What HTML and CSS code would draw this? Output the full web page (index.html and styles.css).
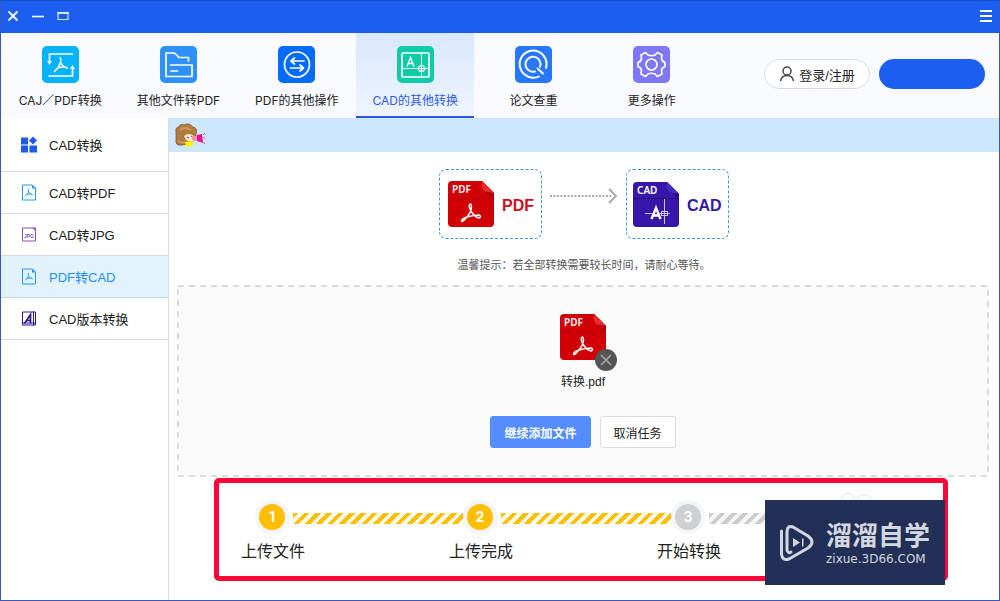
FILE: index.html
```html
<!DOCTYPE html>
<html lang="zh-CN">
<head>
<meta charset="utf-8">
<meta name="viewport" content="width=device-width, initial-scale=1">
<title>CAD转换</title>
<link rel="stylesheet" href="styles.css">
</head>
<body>
<svg class="defs" aria-hidden="true">
  <symbol id="pdf-file" viewBox="0 0 46 46">
    <path d="M4 0H34L46 12V42Q46 46 42 46H4Q0 46 0 42V4Q0 0 4 0Z" fill="#d00006"/>
    <path d="M0 17.500H46" stroke="#b10008"/>
    <path d="M34 0 46 12V17L34 9Z" fill="#a90009"/>
    <path d="M34 0V6Q35 11 40 11L46 12Z" fill="#ee2a2a"/>
    <path d="M21.500 23.500Q23.500 22 23.500 26Q23 32 18 37Q14 42 13.500 40Q14 37 21 35.500Q27 34 31 34Q34 35.500 31 37Q27 36 23.500 31Q20.500 25.500 21.500 23.500Z" fill="none" stroke="#fff" stroke-width="1.500" stroke-linejoin="round"/>
  </symbol>
  <symbol id="page-pdf" viewBox="0 0 14 17">
    <path d="M.5 1H10.500L13.500 4V16H.5Z" fill="none" stroke="#2196f3"/>
    <path d="M10 1V4.500H13.500Z" fill="#2196f3"/>
    <path d="M6.500 5V8Q5 11 3 12.500M6.500 8Q8 10.500 11 11M4.500 10.800Q7 9.500 9.500 10" fill="none" stroke="#2196f3" stroke-width=".9"/>
  </symbol>
</svg>
<div class="window">
  <header class="titlebar">
    <button class="win-btn" aria-label="关闭"><svg width="12" height="12"><path d="M1.500 1.500 10.500 10.500M10.500 1.500 1.500 10.500" stroke="#fff" stroke-width="1.800"/></svg></button>
    <button class="win-btn" aria-label="最小化"><svg width="12" height="12"><path d="M0 6.500H12" stroke="#fff" stroke-width="1.600"/></svg></button>
    <button class="win-btn" aria-label="最大化"><svg width="12" height="12"><path d="M1 2.500H11V9.500H1Z" fill="none" stroke="#dbe7ff" stroke-width="1.200"/><path d="M.5 3H11.500" stroke="#fff" stroke-width="1.500"/></svg></button>
    <button class="win-btn menu-btn" aria-label="菜单"><svg width="14" height="14"><path d="M1 2H13M1 7H13M1 12H13" stroke="#fff" stroke-width="2"/></svg></button>
  </header>
  <div class="toolbar">
    <nav class="tabs">
      <button class="tab"><svg class="tab-icon" viewBox="0 0 37 37"><rect width="37" height="37" rx="5" fill="#06b2fa"/><g fill="none" stroke="#fff" stroke-width="1.700"><path d="M31 8H7.500V16M6.500 30H30.500V22"/><path d="M17.500 12Q19.500 11 18.500 16Q17.500 21 12 26M18.500 16Q20 21 26 22M14 23Q19 20 24 21.500" stroke-width="1.400"/></g><g fill="#fff"><path d="M5 15H10L7.500 19ZM28 23H33L30.500 19Z"/></g></svg><span>CAJ／PDF转换</span></button>
      <button class="tab"><svg class="tab-icon" viewBox="0 0 37 37"><rect width="37" height="37" rx="5" fill="#2e90fa"/><path d="M28.500 15V11.500H19L14.500 7H6V30.500H32V19H10.500M11 25H17.500" fill="none" stroke="#fff" stroke-width="1.700" stroke-linejoin="round" stroke-linecap="round"/></svg><span>其他文件转PDF</span></button>
      <button class="tab"><svg class="tab-icon" viewBox="0 0 37 37"><rect width="37" height="37" rx="5" fill="#046cfc"/><g fill="none" stroke="#fff" stroke-width="1.700" stroke-linecap="round" stroke-linejoin="round"><circle cx="19" cy="18.500" r="12.500"/><path d="M26 15H13M16.500 12 13 15 16.500 18M12.500 22H25.500M22 19 25.500 22 22 25"/></g></svg><span>PDF的其他操作</span></button>
      <button class="tab tab-active"><svg class="tab-icon" viewBox="0 0 37 37"><rect width="37" height="37" rx="5" fill="#0dcca7"/><g fill="none" stroke="#fff"><rect x="5" y="7" width="27" height="24" rx="1" stroke-width="1.700"/><path d="M5 22.500H32M24.500 7V31"/><circle cx="24.500" cy="22.500" r="3" stroke-width="1.200"/><path d="M10 20.500 13.500 11.500 17 20.500M11.200 17.500H15.800" stroke-width="1.400"/></g></svg><span>CAD的其他转换</span></button>
      <button class="tab"><svg class="tab-icon" viewBox="0 0 37 37"><rect width="37" height="37" rx="5" fill="#2677fa"/><g fill="none" stroke="#fff" stroke-width="1.900" stroke-linecap="round"><path d="M24 30.500Q16 34 9 28A13.500 13.500 0 1 1 31 22"/><path d="M20 25.500A7.500 7.500 0 1 1 25 21M22.500 22.500 28 27.500"/></g></svg><span>论文查重</span></button>
      <button class="tab"><svg class="tab-icon" viewBox="0 0 37 37"><rect width="37" height="37" rx="5" fill="#7e78f8"/><g fill="none" stroke="#fff" stroke-width="1.700" stroke-linejoin="round"><path d="M12.500 6.500 15 9Q18.500 10.500 22 9L24.500 6.500 29 9 28.500 12.500Q29 15.500 32 16.500V20.500Q29 21.500 28.500 24.500L29 28 24.500 30.500 22 28Q18.500 26.500 15 28L12.500 30.500 8 28 8.500 24.500Q8 21.500 5 20.500V16.500Q8 15.500 8.500 12.500L8 9Z"/><circle cx="18.500" cy="18.500" r="5.500"/></g></svg><span>更多操作</span></button>
    </nav>
    <div class="account">
      <button class="login"><svg width="16" height="16" viewBox="0 0 16 16"><g fill="none" stroke="#444" stroke-width="1.500"><circle cx="8" cy="5" r="4"/><path d="M1.500 15Q2.500 9.500 8 9.500T14.500 15"/></g></svg>登录/注册</button>
      <button class="vip" aria-label="会员"></button>
    </div>
  </div>
  <div class="body">
    <nav class="sidebar">
      <div class="side-row side-head"><svg class="side-icon" viewBox="0 0 16 16"><path d="M0 1H7V8H0ZM0 9H7V16H0ZM8.500 9H16V16H8.500ZM12 0 16 4 12 8 8 4Z" fill="#1e5aea"/></svg>CAD转换</div>
      <a class="side-row" href="#pdf"><svg class="side-icon"><use href="#page-pdf"/></svg>CAD转PDF</a>
      <a class="side-row" href="#jpg"><svg class="side-icon" viewBox="0 0 16 16"><path d="M1.500 1.500H12L14.500 4V14.500H1.500Z" fill="none" stroke="#8d55a8"/><path d="M11 1H15V5Z" fill="#8d55a8"/><text x="3" y="11" class="jpg-tag">JPG</text></svg>CAD转JPG</a>
      <a class="side-row side-active" href="#cad"><svg class="side-icon"><use href="#page-pdf"/></svg>PDF转CAD</a>
      <a class="side-row" href="#version"><svg class="side-icon" viewBox="0 0 16 16"><g fill="none" stroke="#31148c"><path d="M1.500 1.500H14.500V14.500H1.500ZM1 12.500H15M12.500 1V15"/><path d="M3.500 13 9.500 4V13M5.500 10H10" stroke-width="1.700"/></g></svg>CAD版本转换</a>
    </nav>
    <main class="main">
      <div class="banner"><svg width="32" height="26" viewBox="0 0 32 26"><path d="M1 9Q0 4 4 4Q5 0 9 2Q14 -1 18 4Q23 5 21 11L21 16Q15 22 7 22Q0 23 1 17Z" fill="#b07a3c" stroke="#80501f" stroke-width=".7"/><path d="M5 7Q10 3 16 7M3 17Q6 21 10 19" stroke="#cf9a58" stroke-width="2" fill="none"/><path d="M9 13Q14 9 19 13L20 17Q15 20 11 17Z" fill="#ffe5d3"/><path d="M12 14 14 15M16 13 18 14" stroke="#75342d"/><path d="M10 19 18 18 18 23 11 24Z" fill="#fff20a"/><path d="M17 13 22 13 22 18 17 17Z" fill="#ef92a5"/><path d="M22 12 27 11 28 20 22 18Z" fill="#e81789"/><path d="M28 12 30 10M28 15H30M28 19 30 21" stroke="#f34ba2"/></svg></div>
      <section class="flow">
        <div class="format format-pdf"><svg class="file-icon" viewBox="0 0 46 46"><use href="#pdf-file"/><text x="4" y="12" class="file-tag">PDF</text></svg><span class="format-name">PDF</span></div>
        <svg class="arrow" viewBox="0 0 68 18"><path d="M0 9H62" stroke="#aaa" stroke-width="2" stroke-dasharray="2 1.500"/><path d="M59 2 66 9 59 16" fill="none" stroke="#aaa" stroke-width="2"/></svg>
        <div class="format format-cad"><svg class="file-icon" viewBox="0 0 46 46"><path d="M4 1H34L46 13V42Q46 46 42 46H4Q0 46 0 42V5Q0 1 4 1Z" fill="#3617aa"/><path d="M0 17.500H46" stroke="#24107c"/><path d="M34 1 46 13V17L34 9Z" fill="#1e0b79"/><path d="M34 1V8Q36 12 40 12L46 13Z" fill="#482bc1"/><text x="4" y="13" class="file-tag">CAD</text><path d="M18.500 38 23 27 27.500 38M20 34.500H26" stroke="#fff" stroke-width="2.400" fill="none"/><path d="M12 32.500H19M26 32.500H37M31.500 18V43" stroke="#c9c0ec"/><rect x="28.500" y="30.500" width="6" height="4" fill="none" stroke="#c9c0ec"/></svg><span class="format-name">CAD</span></div>
      </section>
      <p class="tip">温馨提示：若全部转换需要较长时间，请耐心等待。</p>
      <section class="drop">
        <svg class="drop-frame" aria-hidden="true"><rect x="1" y="1" width="100%" height="100%" class="drop-line"/></svg>
        <div class="file">
          <div class="file-thumb"><svg class="file-icon" viewBox="0 0 46 46"><use href="#pdf-file"/><text x="4" y="12" class="file-tag">PDF</text></svg><button class="remove" aria-label="删除"><svg width="22" height="22"><path d="M6 6 16 16M16 6 6 16" stroke="#aaa" stroke-width="1.600"/></svg></button></div>
          <span class="file-name">转换.pdf</span>
        </div>
        <div class="actions"><button class="btn btn-primary">继续添加文件</button><button class="btn">取消任务</button></div>
      </section>
      <section class="steps">
        <ol class="step-list">
          <li class="step"><span class="dot">1</span><span>上传文件</span></li>
          <li class="step"><span class="dot">2</span><span>上传完成</span></li>
          <li class="step step-off"><span class="dot">3</span><span>开始转换</span></li>
        </ol>
        <svg class="rings" width="32" height="16"><g fill="none" stroke="#ddd"><circle cx="8" cy="8" r="6.500"/><circle cx="24" cy="9" r="6.500"/></g></svg>
        <div class="brand">
          <svg width="36" height="38" viewBox="0 0 36 38"><g fill="none" stroke="#d3d7df" stroke-width="3" stroke-linecap="round" stroke-linejoin="round"><path d="M2.500 7V30Q3 37 10 35L29 24Q37 18 29 12L14 3Q8 1 8 8V26Q9 30 12 28"/></g><path d="M14 14V23L21 18.500ZM23 14.500H24.500V22.500H23Z" fill="#d3d7df"/></svg>
          <div class="brand-text"><span class="brand-name">溜溜自学</span><span class="brand-url">zixue.3D66.COM</span></div>
        </div>
      </section>
    </main>
  </div>
</div>
</body>
</html>
```
FILE: styles.css
```css
* { box-sizing: border-box; }
body {
  margin: 0;
  font-family: "Liberation Sans", "Noto Sans CJK SC", sans-serif;
  font-size: 13px;
  color: #222;
}
button { font: inherit; color: inherit; border: 0; padding: 0; background: none; }
svg { display: block; flex: none; }
.defs { position: absolute; width: 0; height: 0; }
.window {
  display: flex;
  flex-direction: column;
  min-height: 100vh;
  border: 1px solid #3b58b4;
  border-top-color: #184bc8;
  background: #fff;
}
.titlebar {
  display: flex;
  align-items: center;
  gap: 13px;
  height: 32px;
  padding: 0 6px 2px;
  background: #1b5ef0;
}
.menu-btn { margin-left: auto; }
.toolbar {
  display: flex;
  justify-content: space-between;
  height: 85px;
  background: #f9faff;
}
.tabs { display: grid; grid-template-columns: repeat(6, 1fr); flex: 0 1 710px; }
.tab {
  display: flex;
  flex-direction: column;
  align-items: center;
  gap: 8px;
  padding-top: 13px;
  border-bottom: 2px solid transparent;
  font-family: Inter, "Noto Sans CJK SC", sans-serif;
  font-size: 12px;
  line-height: 20px;
  white-space: nowrap;
}
.tab-active {
  color: #2d5ce8;
  border-bottom-color: #2857dc;
  background: linear-gradient(#d9e7fc, #eff4ff);
}
.tab-icon { width: 37px; height: 37px; }
.account { display: flex; align-items: center; gap: 9px; padding: 0 14px 3px 0; }
.login {
  display: flex;
  align-items: center;
  justify-content: center;
  gap: 4px;
  width: 106px;
  height: 30px;
  border: 1px solid #d8dbe2;
  border-radius: 15px;
  background: #fff;
}
.vip { width: 106px; height: 30px; border-radius: 15px; background: #1b5ef0; }
.body { display: flex; flex: 1; }
.sidebar { flex: none; width: 168px; border-right: 1px solid #d9dce2; }
.side-row {
  display: flex;
  align-items: center;
  gap: 12px;
  height: 42px;
  padding-left: 20px;
  border-bottom: 1px solid #d9dce2;
  color: #222;
  font-size: 13px;
  text-decoration: none;
}
.side-head { height: 54px; }
.side-active { color: #1890ff; background: #e2f3fe; border-color: #bcdcf0; }
.side-icon { width: 16px; height: 17px; }
.jpg-tag { font: bold 5px "Liberation Sans", sans-serif; fill: #8d55a8; }
.main { flex: 1; min-width: 0; }
.banner { height: 34px; padding: 5px 6px; background: #cde8fe; }
.flow { display: flex; justify-content: center; align-items: center; gap: 8px; margin-top: 17px; }
.format {
  display: flex;
  align-items: center;
  gap: 8px;
  width: 103px;
  height: 70px;
  padding-left: 8px;
  border: 1px dashed #3f96dd;
  border-radius: 7px;
  font-size: 16px;
  font-weight: bold;
}
.format-name { padding-top: 4px; }
.format-pdf { color: #d20c1c; }
.format-cad { padding-left: 6px; color: #3518a1; }
.file-icon { width: 46px; height: 46px; }
.file-tag { font: 600 10px "Noto Sans", sans-serif; fill: #fff; }
.arrow { width: 68px; height: 18px; margin-bottom: 16px; }
.tip { margin: 16px 0 10px; text-align: center; font-size: 11px; line-height: 20px; color: #555; }
.drop {
  position: relative;
  display: flex;
  flex-direction: column;
  align-items: center;
  margin: 0 10px 0 8px;
  padding: 29px 0;
  background: #fafafa;
}
.drop-frame { position: absolute; inset: 0; width: 100%; height: 100%; padding: 0 2px 2px 0; overflow: visible; pointer-events: none; }
.drop-line { fill: none; stroke: #dcdcdc; stroke-width: 2; stroke-dasharray: 6 5; }
.file { display: flex; flex-direction: column; align-items: center; gap: 12px; }
.file-thumb { position: relative; }
.remove { position: absolute; right: -11px; bottom: -11px; border-radius: 50%; background: #555; }
.file-name { font-size: 12px; line-height: 20px; }
.actions { display: flex; gap: 9px; margin-top: 24px; }
.btn {
  height: 32px;
  padding: 0 13px;
  border: 1px solid #ddd;
  border-radius: 3px;
  background: #fff;
  font-size: 12px;
}
.btn-primary { border-color: #548dff; background: #548dff; color: #fff; font-weight: bold; }
.steps {
  position: relative;
  height: 103px;
  margin: 1px 51px 19px 45px;
  border: 5px solid #fb0736;
  border-radius: 5px;
  background: #fff;
}
.step-list { display: flex; margin: 0; padding: 17px 0 0; list-style: none; }
.step {
  position: relative;
  display: flex;
  flex: 0 0 208px;
  flex-direction: column;
  align-items: flex-start;
  gap: 6px;
  padding-left: 22px;
  font-size: 16px;
  line-height: 24px;
}
.dot {
  width: 34px;
  height: 34px;
  margin-left: 14px;
  border: 4px solid #f2f5fa;
  border-radius: 50%;
  background: #ffbf00;
  color: #fff;
  font: bold 14px/26px Inter, sans-serif;
  text-align: center;
}
.step::after {
  content: "";
  position: absolute;
  top: 13px;
  left: 74px;
  width: 170px;
  height: 11px;
  background: repeating-linear-gradient(135deg, #ffbf00 0 4px, #fffbea 4px 8px);
}
.step-off .dot { background: #d0d0d0; }
.step-off::after { background: repeating-linear-gradient(135deg, #ccc 0 4px, #f6f6f6 4px 8px); }
.rings { position: absolute; right: 71px; top: 9px; }
.brand {
  position: absolute;
  right: -2px;
  top: 17px;
  display: flex;
  align-items: center;
  gap: 11px;
  width: 180px;
  height: 85px;
  padding-left: 14px;
  background: #222f57;
  color: #d3d7df;
}
.brand-text { display: flex; flex-direction: column; gap: 3px; }
.brand-name { font: bold 26px/30px "Noto Sans CJK SC", sans-serif; }
.brand-url { font: 12px/14px "DejaVu Sans", sans-serif; }
```
